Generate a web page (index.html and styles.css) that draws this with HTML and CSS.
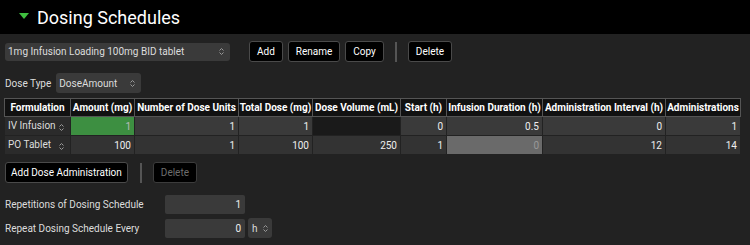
FILE: index.html
```html
<!DOCTYPE html>
<html lang="en">

<head>
    <meta charset="UTF-8">
    <meta name="viewport" content="width=device-width, initial-scale=1.0">
    <title>Dosing Schedules</title>
    <link rel="stylesheet" href="styles.css">
</head>

<body>
    <div class="header">
        <span class="caret"></span>
        <h1>Dosing Schedules</h1>
    </div>

    <div class="toolbar">
        <div class="select schedule-select">
            <span>1mg Infusion Loading 100mg BID tablet</span>
            <svg class="spin" width="5" height="9" viewBox="0 0 5 9"><path d="M0.5 3.5 L2.5 1.5 L4.5 3.5 M0.5 5.5 L2.5 7.5 L4.5 5.5" fill="none" stroke="#999" stroke-width="1"/></svg>
        </div>
        <button class="btn">Add</button>
        <button class="btn">Rename</button>
        <button class="btn">Copy</button>
        <span class="divider"></span>
        <button class="btn">Delete</button>
    </div>

    <div class="dose-type">
        <label>Dose Type</label>
        <div class="select type-select">
            <span>DoseAmount</span>
            <svg class="spin" width="5" height="9" viewBox="0 0 5 9"><path d="M0.5 3.5 L2.5 1.5 L4.5 3.5 M0.5 5.5 L2.5 7.5 L4.5 5.5" fill="none" stroke="#999" stroke-width="1"/></svg>
        </div>
    </div>

    <table class="grid">
        <thead>
            <tr>
                <th class="c-form">Formulation</th>
                <th class="c-amt">Amount (mg)</th>
                <th class="c-units">Number of Dose Units</th>
                <th class="c-total">Total Dose (mg)</th>
                <th class="c-vol">Dose Volume (mL)</th>
                <th class="c-start">Start (h)</th>
                <th class="c-inf">Infusion Duration (h)</th>
                <th class="c-int">Administration Interval (h)</th>
                <th class="c-adm">Administrations</th>
            </tr>
        </thead>
        <tbody>
            <tr class="row-a">
                <td class="form">IV Infusion<svg class="spin" width="5" height="9" viewBox="0 0 5 9"><path d="M0.5 3.5 L2.5 1.5 L4.5 3.5 M0.5 5.5 L2.5 7.5 L4.5 5.5" fill="none" stroke="#999" stroke-width="1"/></svg></td>
                <td class="selected">1</td>
                <td>1</td>
                <td>1</td>
                <td class="empty"></td>
                <td>0</td>
                <td>0.5</td>
                <td>0</td>
                <td>1</td>
            </tr>
            <tr class="row-b">
                <td class="form">PO Tablet<svg class="spin" width="5" height="9" viewBox="0 0 5 9"><path d="M0.5 3.5 L2.5 1.5 L4.5 3.5 M0.5 5.5 L2.5 7.5 L4.5 5.5" fill="none" stroke="#999" stroke-width="1"/></svg></td>
                <td>100</td>
                <td>1</td>
                <td>100</td>
                <td>250</td>
                <td>1</td>
                <td class="disabled">0</td>
                <td>12</td>
                <td>14</td>
            </tr>
        </tbody>
    </table>

    <div class="toolbar lower">
        <button class="btn wide">Add Dose Administration</button>
        <span class="divider"></span>
        <button class="btn" disabled>Delete</button>
    </div>

    <div class="field">
        <label>Repetitions of Dosing Schedule</label>
        <div class="num">1</div>
    </div>
    <div class="field">
        <label>Repeat Dosing Schedule Every</label>
        <div class="num">0</div>
        <div class="select unit-select">
            <span>h</span>
            <svg class="spin" width="5" height="9" viewBox="0 0 5 9"><path d="M0.5 3.5 L2.5 1.5 L4.5 3.5 M0.5 5.5 L2.5 7.5 L4.5 5.5" fill="none" stroke="#999" stroke-width="1"/></svg>
        </div>
    </div>
</body>

</html>
```

FILE: styles.css
```css
body {
    background-color: #222;
    margin: 0;
    padding: 0;
    color: #ddd;
    font-family: Roboto, "Liberation Sans", Arial, sans-serif;
    font-size: 10px;
}

.header {
    height: 34px;
    background-color: #000;
    display: flex;
    align-items: center;
    padding-left: 19px;
}

.caret {
    width: 0;
    height: 0;
    border-left: 5px solid transparent;
    border-right: 5px solid transparent;
    border-top: 6px solid #3fbf3f;
    margin-top: -2px;
}

.header h1 {
    margin: 0 0 0 8px;
    font-size: 18px;
    font-weight: normal;
    color: #fff;
}

.toolbar {
    display: flex;
    align-items: center;
    gap: 5px;
    margin-top: 7px;
    padding-left: 5px;
}

.select {
    display: flex;
    align-items: center;
    justify-content: space-between;
    box-sizing: border-box;
    background-color: #3a3a3a;
    border-radius: 3px;
    color: #ddd;
    padding: 0 6px 0 3px;
    white-space: nowrap;
}

.schedule-select {
    width: 225px;
    height: 18px;
    margin-right: 14px;
}

.btn {
    height: 21px;
    box-sizing: border-box;
    background-color: #000;
    color: #fff;
    border: 1px solid #4a4a4a;
    border-radius: 3px;
    font-family: inherit;
    font-size: 10px;
    padding: 0 7px;
}

.btn.wide {
    padding: 0 5px;
}

.btn:disabled {
    color: #6e6e6e;
    border-color: #3c3c3c;
}

.divider {
    width: 2px;
    height: 20px;
    background-color: #555;
    margin: 0 6px;
}

.dose-type {
    display: flex;
    align-items: center;
    gap: 5px;
    margin-top: 11px;
    padding-left: 5px;
}

.type-select {
    width: 85px;
    height: 20px;
}

.grid {
    margin: 5px 0 0 4px;
    border-collapse: collapse;
    width: 735px;
    table-layout: fixed;
}

.grid th {
    background-color: #111;
    color: #fff;
    font-weight: bold;
    height: 17px;
    padding: 0;
    border: 1px solid #555;
    text-align: center;
    white-space: nowrap;
}

.grid td {
    height: 18px;
    padding: 0 3px;
    text-align: right;
    border: 1px solid #222;
    color: #eee;
    white-space: nowrap;
}

.row-a td {
    background-color: #3a3a3a;
}

.row-b td {
    background-color: #333;
}

.grid td.form {
    text-align: left;
    color: #ddd;
    background-color: #2b2b2b;
}

.grid td.form .spin {
    float: right;
    margin: 3px 3px 0 0;
}

.grid td.selected {
    background-color: #3d8f41;
    color: #bbb;
}

.grid td.empty {
    background-color: #1a1a1a;
}

.grid td.disabled {
    background-color: #6a6a6a;
    color: #999;
}

.c-form { width: 65px; }
.c-amt { width: 63px; }
.c-units { width: 103px; }
.c-total { width: 73px; }
.c-vol { width: 87px; }
.c-start { width: 45px; }
.c-inf { width: 95px; }
.c-int { width: 122px; }
.c-adm { width: 74px; }

.toolbar.lower {
    margin-top: 7px;
}

.toolbar.lower .divider {
    margin: 0 6px 0 7px;
}

.field {
    display: flex;
    align-items: center;
    padding-left: 5px;
    margin-top: 12px;
}

.field + .field {
    margin-top: 4px;
}

.field label {
    width: 160px;
}

.num {
    width: 80px;
    height: 19px;
    box-sizing: border-box;
    background-color: #3a3a3a;
    border-radius: 2px;
    text-align: right;
    padding-right: 4px;
    line-height: 19px;
    color: #eee;
}

.unit-select {
    width: 24px;
    height: 20px;
    margin-left: 3px;
    padding: 0 4px;
}
```
